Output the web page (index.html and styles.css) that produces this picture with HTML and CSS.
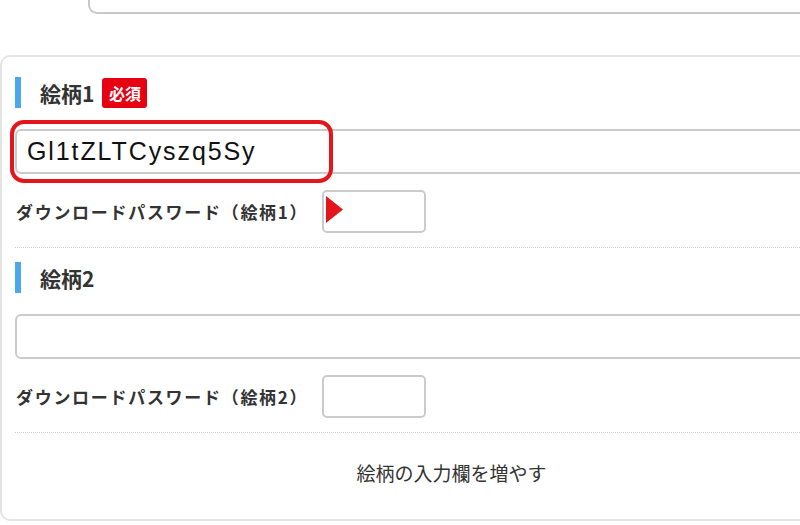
FILE: index.html
```html
<!DOCTYPE html>
<html lang="ja">
<head>
  <meta charset="UTF-8">
  <meta name="viewport" content="width=device-width, initial-scale=1.0">
  <title>絵柄の入力</title>
  <link rel="stylesheet" href="styles.css">
</head>
<body>
  <!-- end of the previous field, cut off at the top -->
  <div class="prev-field"></div>

  <div class="card">
    <!-- design 1 -->
    <div class="section">
      <h2 class="heading">絵柄1 <span class="badge">必須</span></h2>
      <div class="field">
        <div class="text-input">Gl1tZLTCyszq5Sy</div>
        <div class="highlight"></div>
      </div>
      <div class="pw-row">
        <label class="pw-label">ダウンロードパスワード（絵柄1）</label>
        <div class="pw-input">
          <svg class="pointer" width="17" height="27" viewBox="0 0 17 27"><polygon points="0,0 17,13.5 0,27" fill="#e3171b"/></svg>
        </div>
      </div>
    </div>

    <!-- design 2 -->
    <div class="section">
      <h2 class="heading">絵柄2</h2>
      <div class="field">
        <div class="text-input"></div>
      </div>
      <div class="pw-row">
        <label class="pw-label">ダウンロードパスワード（絵柄2）</label>
        <div class="pw-input"></div>
      </div>
    </div>

    <div class="add-more">絵柄の入力欄を増やす</div>
  </div>
</body>
</html>
```

FILE: styles.css
```css
body {
  margin: 0;
  background: #fff;
  font-family: "Noto Sans CJK JP", "Noto Sans", sans-serif;
  color: #333;
  overflow: hidden;
}
.prev-field {
  margin-left: 88px;
  width: 900px;
  height: 12px;
  border: 2px solid #c8c8c8;
  border-top: none;
  border-radius: 0 0 0 9px;
}
.card {
  margin-top: 41px;
  width: 888px;
  padding: 20px 0 0 13px;
  height: 466px;
  border: 2px solid #e4e4e4;
  border-right: none;
  border-radius: 10px 0 0 10px;
  box-sizing: border-box;
}
.section {
  border-bottom: 1px dotted #cfcfcf;
  padding-bottom: 14px;
  margin-bottom: 14px;
}
.heading {
  display: flex;
  align-items: center;
  height: 31px;
  margin: 0;
  padding-left: 19px;
  border-left: 6px solid #4aa8ee;
  font-size: 21px;
  font-weight: bold;
  color: #333;
}
.badge {
  margin-left: 8px;
  width: 45px;
  height: 30px;
  line-height: 30px;
  text-align: center;
  background: #e60012;
  color: #fff;
  font-size: 16px;
  border-radius: 3px;
}
.field {
  position: relative;
  margin-top: 21px;
}
.text-input {
  height: 45px;
  box-sizing: border-box;
  border: 2px solid #cbcbcb;
  border-radius: 6px;
  padding-left: 10px;
  font-family: "Liberation Sans", Arial, sans-serif;
  font-size: 25px;
  letter-spacing: 1.9px;
  line-height: 41px;
  color: #111;
}
.highlight {
  position: absolute;
  left: -5px;
  top: -9px;
  width: 323px;
  height: 63px;
  box-sizing: border-box;
  border: 4px solid #e3171b;
  border-radius: 14px;
}
.pw-row {
  display: flex;
  align-items: center;
  margin-top: 16px;
}
.pw-label {
  width: 307px;
  padding-left: 1px;
  box-sizing: border-box;
  font-size: 17px;
  font-weight: bold;
  letter-spacing: 1.7px;
  white-space: nowrap;
  color: #333;
}
.pw-input {
  position: relative;
  width: 104px;
  height: 43px;
  box-sizing: border-box;
  border: 2px solid #cbcbcb;
  border-radius: 5px;
}
.pointer {
  position: absolute;
  left: 2px;
  top: 4px;
}
.add-more {
  margin-top: 26px;
  text-align: center;
  font-size: 19px;
  color: #333;
}
```
